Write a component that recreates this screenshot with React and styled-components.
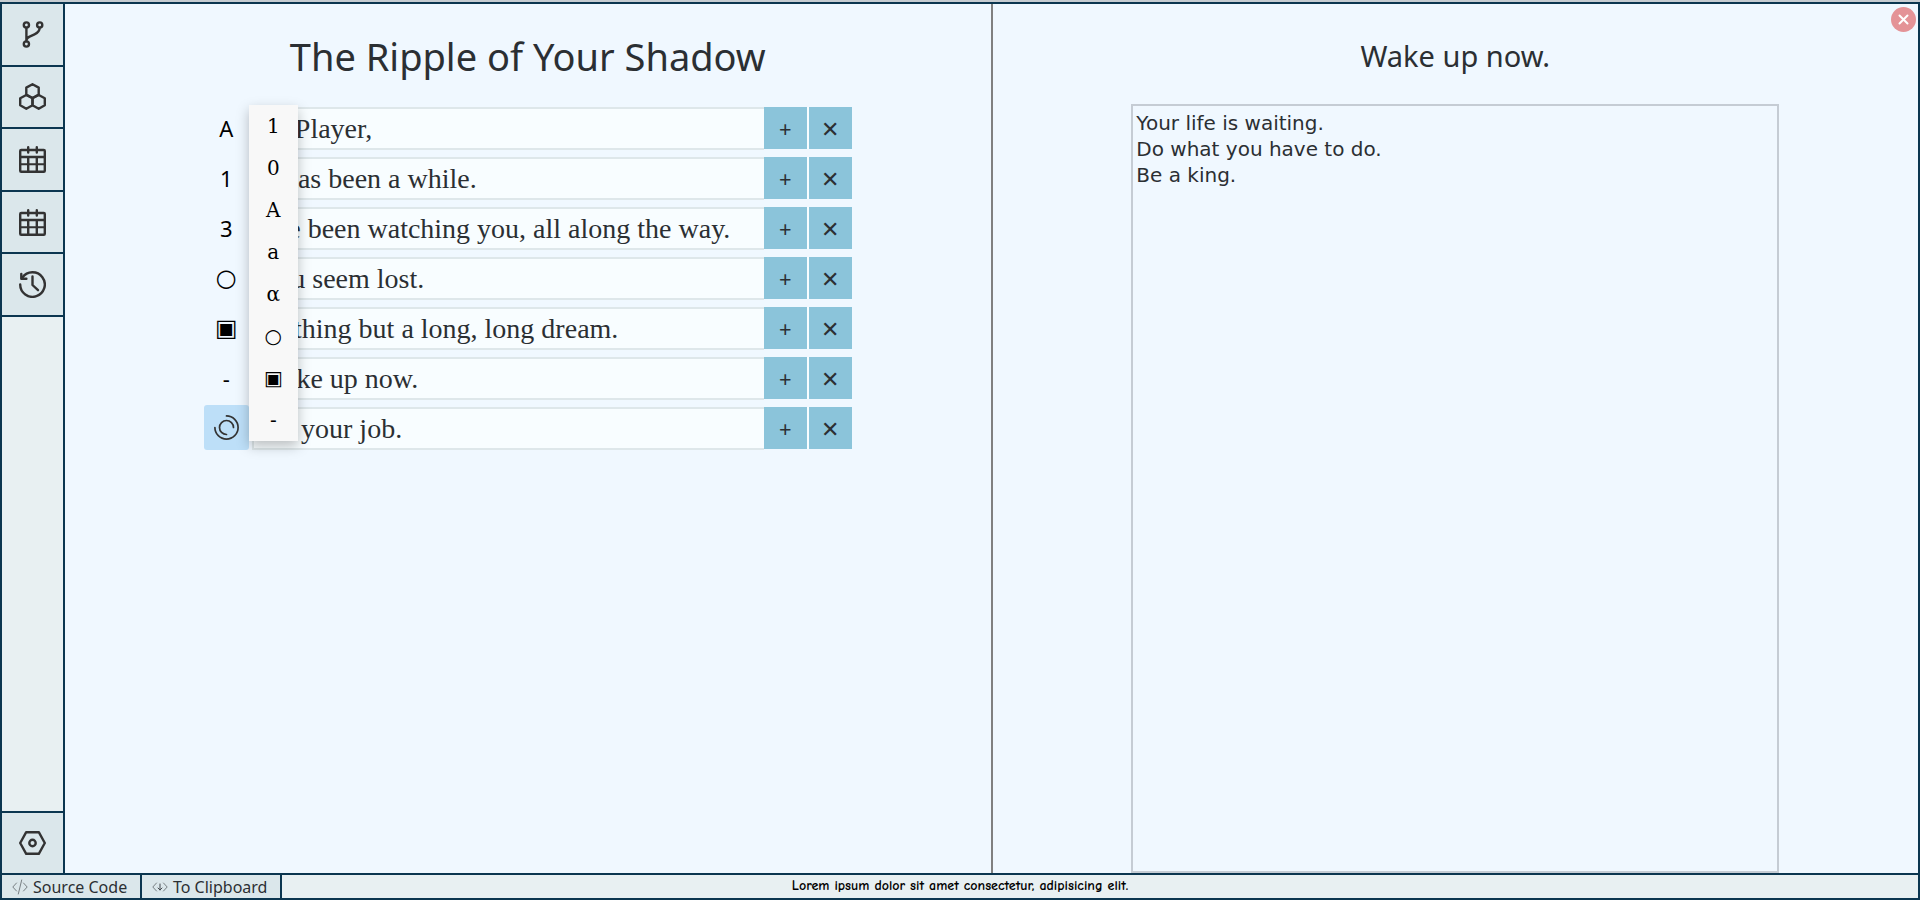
import React, { useState } from 'react';
import styled, { createGlobalStyle, css } from 'styled-components';

const navy = '#0b3650';
const ink = '#2b2f33';
const sans = '"Noto Sans", "Open Sans", sans-serif';

const GlobalStyle = createGlobalStyle`
  *, *::before, *::after { box-sizing: border-box; }
  body { margin: 0; background: #f0f8ff; color: ${ink}; font-family: ${sans}; }
  button, input, textarea { margin: 0; font: inherit; color: inherit; }
  button { cursor: pointer; }
`;

const Shell = styled.div`
  display: flex;
  flex-direction: column;
  min-height: 100vh;
  border-top: 2px solid #c6ccd1;
`;

const Frame = styled.div`
  flex: 1;
  display: flex;
  flex-direction: column;
  border: 2px solid ${navy};
`;

const Body = styled.div`
  flex: 1;
  display: flex;
`;

const Sidebar = styled.nav`
  display: flex;
  flex-direction: column;
  justify-content: space-between;
  width: 63px;
  background: #e8f0f2;
  border-right: 2px solid ${navy};
`;

const ToolGroup = styled.div`
  display: grid;
  grid-auto-rows: 1fr;
  height: 313px;
`;

const ToolButton = styled.button`
  display: flex;
  align-items: center;
  justify-content: center;
  padding: 0;
  border: 0;
  border-bottom: 2px solid ${navy};
  background: #dbe7eb;
  ${({ $foot }) => $foot && css`
    height: 62px;
    border-bottom: 0;
    border-top: 2px solid ${navy};
  `}
`;

const Panel = styled.section`
  position: relative;
  flex: 1;
  min-width: 0;
  display: flex;
  flex-direction: column;
  align-items: center;
`;

const Divider = styled.div`
  width: 2px;
  background: #808080;
`;

const Title = styled.h1`
  margin: 26px 0 22px;
  font-size: ${({ $small }) => ($small ? 29 : 38)}px;
  line-height: 52px;
  font-weight: 400;
`;

const List = styled.div`
  position: relative;
  width: 70%;
  display: flex;
  flex-direction: column;
  gap: 5px;
  padding-top: 1px;
`;

const Row = styled.div`
  display: flex;
  align-items: flex-end;
  gap: 3px;
  height: 45px;
`;

const Marker = styled.button`
  display: flex;
  align-items: center;
  justify-content: center;
  width: 45px;
  height: 45px;
  padding: 0;
  border: 0;
  border-radius: 3px;
  background: ${({ $active }) => ($active ? '#bddff8' : 'transparent')};
  color: #000;
  font-family: ${({ $symbol }) => ($symbol ? '"DejaVu Sans", sans-serif' : sans)};
  font-size: ${({ $symbol }) => ($symbol ? 24 : 22)}px;
  line-height: 28px;
`;

const Field = styled.div`
  flex: 1;
  min-width: 0;
  display: flex;
  height: 43px;
`;

const LineInput = styled.input`
  flex: 1;
  min-width: 0;
  padding: 1px 6px 0;
  border: 2px solid #dee7ea;
  border-right: 0;
  border-radius: 0;
  outline: 0;
  background: #f8fdff;
  font-family: "Liberation Serif", serif;
  font-size: 28px;
`;

const Actions = styled.div`
  display: flex;
  gap: 2px;
  height: 42px;
  background: #f8fdff;
`;

const ActionButton = styled.button`
  width: 43px;
  padding: 0;
  border: 0;
  background: #8bc4da;
  font-family: ${sans};
  font-size: 22px;
  line-height: 42px;
`;

const Menu = styled.div`
  position: absolute;
  top: 1px;
  left: 45px;
  width: 49px;
  display: flex;
  flex-direction: column;
  background: #f8f8f8;
  box-shadow: 0 5px 12px rgba(0, 0, 0, 0.25);
`;

const MenuItem = styled.button`
  height: 42px;
  padding: 0;
  border: 0;
  background: transparent;
  color: #000;
  font-family: "DejaVu Serif", serif;
  font-size: 20px;
  line-height: 42px;
`;

const Note = styled.textarea`
  flex: 1;
  width: 70%;
  padding: 4px 3px;
  border: 2px solid #c5ccd4;
  outline: 0;
  resize: none;
  background: transparent;
  font-family: "DejaVu Sans", sans-serif;
  font-size: 20px;
  line-height: 26px;
`;

const CloseButton = styled.button`
  position: absolute;
  top: 3px;
  right: 2px;
  display: flex;
  align-items: center;
  justify-content: center;
  width: 25px;
  height: 25px;
  padding: 0;
  border: 0;
  border-radius: 50%;
  background: #e49397;
`;

const Footer = styled.footer`
  display: grid;
  grid-template-columns: 1fr auto 1fr;
  height: 25px;
  border-top: 2px solid ${navy};
  background: #e8f0f2;
`;

const FooterTools = styled.div`
  display: flex;
`;

const FooterButton = styled.button`
  display: flex;
  align-items: center;
  gap: 5px;
  width: 140px;
  padding: 0 0 0 10px;
  border: 0;
  border-right: 2px solid ${navy};
  background: #dbe7eb;
  font-size: 16px;
  line-height: 22px;
  white-space: nowrap;
`;

const Status = styled.p`
  margin: 0;
  color: #000;
  font-family: "Comic Neue", "Comic Sans MS", ${sans};
  font-size: 14px;
  font-weight: 700;
  line-height: 21px;
`;

function Icon({ size = 27, weight = 2.4, color = '#333', children }) {
  return (
    <svg width={size} height={size} viewBox={`0 0 ${size} ${size}`} fill="none" stroke={color}
      strokeWidth={weight} strokeLinecap="round" strokeLinejoin="round" aria-hidden="true">
      {children}
    </svg>
  );
}

const BranchIcon = () => (
  <Icon>
    <circle cx="7.4" cy="4" r="2.6" />
    <circle cx="20.7" cy="4" r="2.6" />
    <circle cx="7.4" cy="23" r="2.6" />
    <path d="M7.4 6.6V20.4M20.7 6.6C20.7 10.6 18.8 11.9 15.5 13.4L10.6 15.6C8.6 16.5 7.6 17.4 7.4 19" />
  </Icon>
);

const HexagonsIcon = () => (
  <Icon>
    <path d="M13.5 1.2L19.7 4.6V11.6L13.5 15L7.3 11.6V4.6Z" />
    <path d="M7.3 12L13.5 15.3V22.3L7.3 25.8L1.2 22.3V15.3Z" />
    <path d="M19.7 12L25.8 15.3V22.3L19.7 25.8L13.5 22.3V15.3Z" />
  </Icon>
);

const CalendarIcon = () => (
  <Icon>
    <rect x="1.2" y="4" width="24.6" height="21.8" rx="1" />
    <path d="M1.2 11H25.8M9.2 11V26M17.8 11V26M9.2 1.2V6.5M17.8 1.2V6.5" />
    <path d="M1.2 18.3H25.8" strokeWidth="2" />
  </Icon>
);

const HistoryIcon = () => (
  <Icon>
    <path d="M1.2 13.5A12.3 12.3 0 1 0 3.4 6.5" />
    <path d="M2.3 3V7.8H7.4M13.5 5.5V14L19 19.2" />
  </Icon>
);

const SettingsIcon = () => (
  <Icon>
    <path d="M1.2 13L7.2 2.2H19.8L25.8 13L19.8 23.8H7.2Z" />
    <circle cx="13.5" cy="13" r="3.2" />
  </Icon>
);

const SwirlIcon = () => (
  <Icon size={25} weight={1.7}>
    <path d="M0.9 12.5A11.6 11.6 0 1 0 12.5 0.9" />
    <path d="M12.5 19.5A7 7 0 1 1 19.5 12.5" />
  </Icon>
);

const CodeIcon = () => (
  <Icon size={16} weight={1} color="#777f83">
    <path d="M4.5 4L0.8 8L4.5 12M11.5 4L15.2 8L11.5 12M9.7 1L6.3 15" />
  </Icon>
);

const CopyCodeIcon = () => (
  <Icon size={16} weight={1} color="#777f83">
    <path d="M4.5 4L0.8 8L4.5 12M11.5 4L15.2 8L11.5 12" />
    <path d="M8 5V11M6 9L8 11L10 9" stroke="#444b50" />
  </Icon>
);

const CrossIcon = () => (
  <Icon size={11} weight={2} color="#fff">
    <path d="M1.5 1.5L9.5 9.5M9.5 1.5L1.5 9.5" />
  </Icon>
);

const tools = [
  ['Branches', BranchIcon],
  ['Modules', HexagonsIcon],
  ['Calendar', CalendarIcon],
  ['Schedule', CalendarIcon],
  ['History', HistoryIcon],
];

const initialLines = [
  { mark: 'A', text: 'Hi Player,' },
  { mark: '1', text: 'It has been a while.' },
  { mark: '3', text: "I've been watching you, all along the way." },
  { mark: '○', text: 'You seem lost.', symbol: true },
  { mark: '▣', text: 'Nothing but a long, long dream.', symbol: true },
  { mark: '-', text: 'Wake up now.' },
  { mark: null, text: 'Do your job.' },
];

const markChoices = ['1', '0', 'A', 'a', 'α', '○', '▣', '-'];

export default function App() {
  const [lines, setLines] = useState(initialLines);
  const [note, setNote] = useState('Your life is waiting.\nDo what you have to do.\nBe a king.');

  const editLine = (index, text) =>
    setLines(lines.map((line, i) => (i === index ? { ...line, text } : line)));

  return (
    <>
      <GlobalStyle />
      <Shell>
        <Frame>
          <Body>
            <Sidebar>
              <ToolGroup>
                {tools.map(([label, Glyph]) => (
                  <ToolButton key={label} type="button" aria-label={label}><Glyph /></ToolButton>
                ))}
              </ToolGroup>
              <ToolButton $foot type="button" aria-label="Settings"><SettingsIcon /></ToolButton>
            </Sidebar>

            <Panel>
              <Title>The Ripple of Your Shadow</Title>
              <List>
                {lines.map((line, i) => (
                  <Row key={i}>
                    <Marker type="button" $active={!line.mark} $symbol={line.symbol} aria-label={`Marker of line ${i + 1}`}>
                      {line.mark || <SwirlIcon />}
                    </Marker>
                    <Field>
                      <LineInput aria-label={`Line ${i + 1}`} value={line.text}
                        onChange={(e) => editLine(i, e.target.value)} />
                      <Actions>
                        <ActionButton type="button" aria-label="Add line">+</ActionButton>
                        <ActionButton type="button" aria-label="Remove line">✕</ActionButton>
                      </Actions>
                    </Field>
                  </Row>
                ))}
                <Menu>
                  {markChoices.map((mark) => <MenuItem key={mark} type="button">{mark}</MenuItem>)}
                </Menu>
              </List>
            </Panel>

            <Divider />

            <Panel>
              <Title as="h2" $small>Wake up now.</Title>
              <Note aria-label="Note" spellCheck={false} value={note} onChange={(e) => setNote(e.target.value)} />
              <CloseButton type="button" aria-label="Close"><CrossIcon /></CloseButton>
            </Panel>
          </Body>

          <Footer>
            <FooterTools>
              <FooterButton type="button"><CodeIcon />Source Code</FooterButton>
              <FooterButton type="button"><CopyCodeIcon />To Clipboard</FooterButton>
            </FooterTools>
            <Status>Lorem ipsum dolor sit amet consectetur, adipisicing elit.</Status>
          </Footer>
        </Frame>
      </Shell>
    </>
  );
}
